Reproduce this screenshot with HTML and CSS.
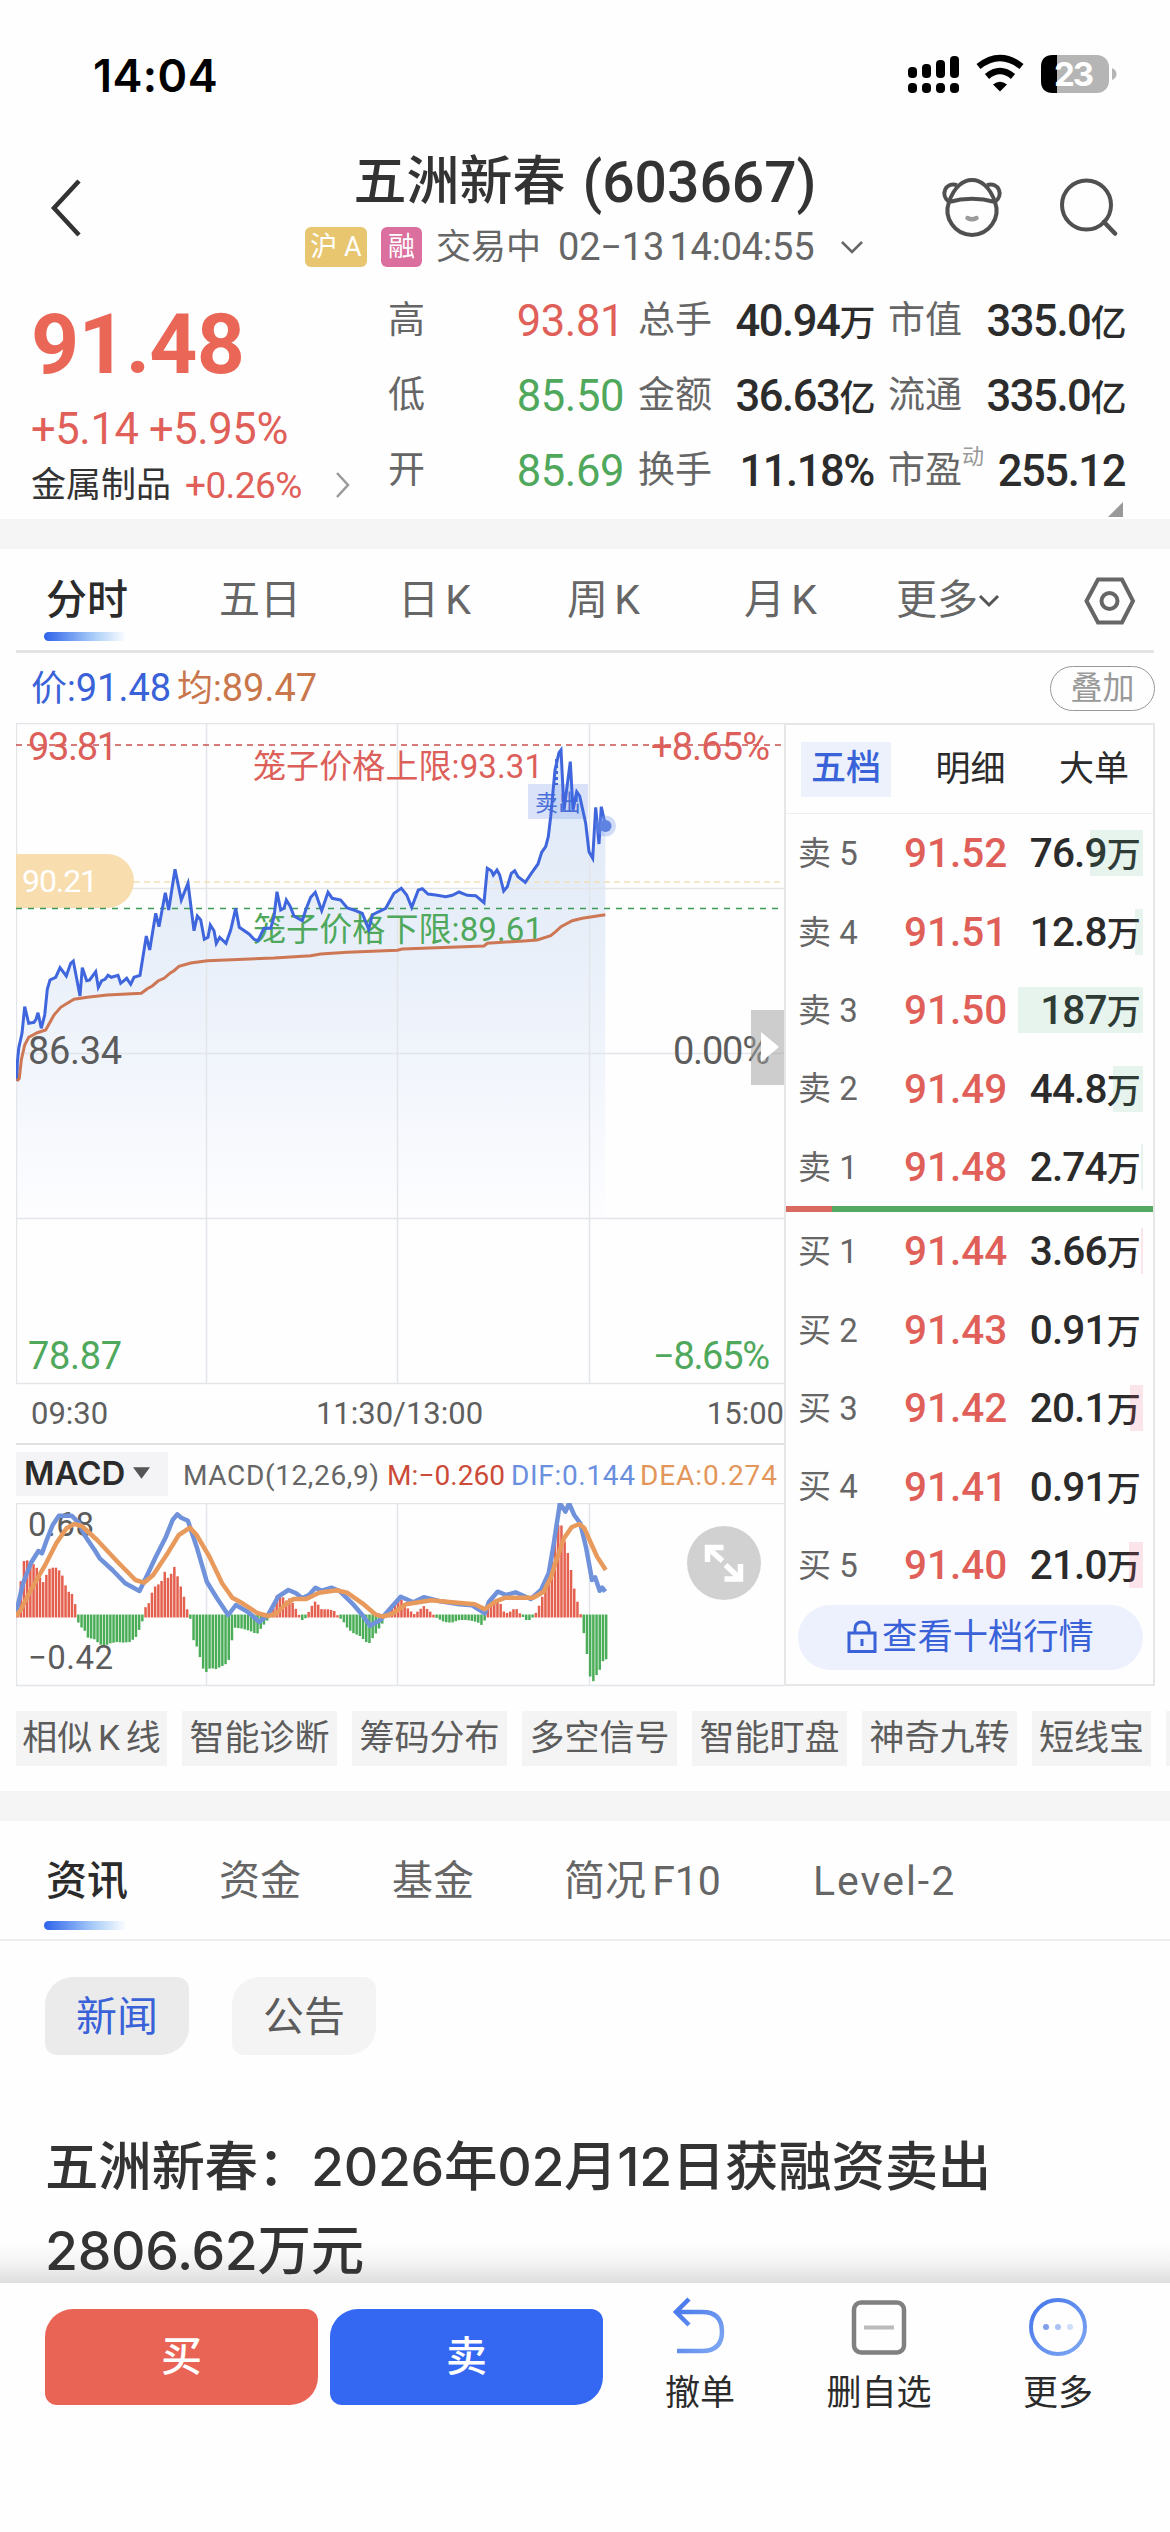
FILE: index.html
```html
<!doctype html>
<html lang="zh-CN">
  <head>
    <meta charset="UTF-8" />
    <meta name="viewport" content="width=device-width, initial-scale=1.0" />
    <title>五洲新春 (603667)</title>
    <link rel="stylesheet" href="styles.css">
  </head>
  <body>
    <div class="status-bar">
      <span class="time">14:04</span>
      <svg class="status-icons" viewBox="0 0 210 44" width="210" height="44">
        <g fill="#000">
          <rect x="0" y="14" width="9" height="11" rx="4" />
          <rect x="14" y="11" width="9" height="14" rx="4" />
          <rect x="28" y="7" width="9" height="18" rx="4" />
          <rect x="42" y="3" width="9" height="22" rx="4" />
          <rect x="0" y="30" width="9" height="10" rx="4" />
          <rect x="14" y="30" width="9" height="10" rx="4" />
          <rect x="28" y="30" width="9" height="10" rx="4" />
          <rect x="42" y="30" width="9" height="10" rx="4" />
          <path d="M92 38.500l-7-7q7-5.500 14 0z" />
        </g>
        <path d="M70.500 13.500q21.500-17 43 0M79 23.500q13-11 26 0" fill="none" stroke="#000" stroke-width="6.500" />
        <rect x="133" y="2" width="68" height="38" rx="12" fill="#b5b5b5" />
        <path d="M149 2h-4q-12 0-12 12v14q0 12 12 12h4z" fill="#000" />
        <path d="M204 15q4.500 2 4.500 6t-4.500 6z" fill="#b5b5b5" />
        <text x="146" y="33" class="battery" textLength="40">23</text>
      </svg>
    </div>

    <div class="nav">
      <svg class="back" viewBox="0 0 32 60" width="32" height="60">
        <path d="M29 3L4 30l25 27" fill="none" stroke="#333" stroke-width="4.500" />
      </svg>
      <div class="nav-title">
        <h1>五洲新春 <span class="code">(603667)</span></h1>
        <div class="nav-sub">
          <span class="tag tag-sh">沪 A</span>
          <span class="tag tag-rong">融</span>
          <span class="state">交易中</span>
          <span class="stamp">02−13 14:04:55</span>
          <svg viewBox="0 0 24 14" width="24" height="14">
            <path d="M2 2l10 10L22 2" fill="none" stroke="#666" stroke-width="2.500" />
          </svg>
        </div>
      </div>
      <svg class="mascot" viewBox="0 0 62 60" width="62" height="60">
        <g fill="none" stroke="#505050" stroke-width="4">
          <path d="M8 25C13 10 22 3 31 3s18 7 23 22" />
          <path d="M8 25a24.500 24.500 0 1 0 46 0q-23-6.500-46 0z" />
          <path d="M8 25C-1 18 4 5 16 8M54 25c9-7 4-20-8-17" />
        </g>
        <path d="M26.500 41q4.500 2.500 9 0" fill="none" stroke="#9b9b9b" stroke-width="4.500" stroke-linecap="round" />
      </svg>
      <svg class="search" viewBox="0 0 58 60" width="58" height="60">
        <circle cx="26.500" cy="28" r="24.500" fill="none" stroke="#505050" stroke-width="4" />
        <path d="M44 45l11 11.500" stroke="#505050" stroke-width="4.500" stroke-linecap="round" />
      </svg>
    </div>

    <div class="quote">
      <div class="quote-main">
        <div class="price">91.48</div>
        <div class="change">+5.14 +5.95%</div>
        <div class="sector">
          <span>金属制品</span>
          <span class="sector-pct">+0.26%</span>
          <svg viewBox="0 0 16 28" width="16" height="28">
            <path d="M2 2l11 12L2 26" fill="none" stroke="#999" stroke-width="2.500" />
          </svg>
        </div>
      </div>
      <div class="quote-grid">
        <span>高</span><b class="up">93.81</b>
        <span>总手</span><b>40.94<i>万</i></b>
        <span>市值</span><b>335.0<i>亿</i></b>
        <span>低</span><b class="down">85.50</b>
        <span>金额</span><b>36.63<i>亿</i></b>
        <span>流通</span><b>335.0<i>亿</i></b>
        <span>开</span><b class="down">85.69</b>
        <span>换手</span><b>11.18%</b>
        <span>市盈<sup>动</sup></span><b>255.12</b>
      </div>
      <div class="corner"></div>
    </div>

    <div class="band"></div>

    <div class="chart-tabs">
      <span class="active">分时</span>
      <span>五日</span>
      <span>日 K</span>
      <span>周 K</span>
      <span>月 K</span>
      <span>更多<svg viewBox="0 0 22 14" width="22" height="14"><path d="M2 2l9 9 9-9" fill="none" stroke="#555" stroke-width="3" /></svg></span>
      <svg viewBox="0 0 52 48" width="52" height="48">
        <path d="M14 2.500h24L49 24 38 45.500H14L2.500 24z" fill="none" stroke="#666" stroke-width="4" />
        <circle cx="25.500" cy="24" r="8" fill="none" stroke="#666" stroke-width="4" />
      </svg>
    </div>

    <div class="legend">
      <span class="legend-price"><i>价:</i>91.48</span>
      <span class="legend-avg"><i>均:</i>89.47</span>
      <span class="overlay-btn">叠加</span>
    </div>

    <div class="market">
      <div class="charts">
        <svg class="minute" viewBox="0 0 768 662" width="768" height="662">
          <defs>
            <linearGradient id="fill" gradientUnits="userSpaceOnUse" x1="0" y1="40" x2="0" y2="495">
              <stop offset="0" stop-color="#dfe9f7" />
              <stop offset="0.4" stop-color="#e8eff9" />
              <stop offset="1" stop-color="#fdfdff" />
            </linearGradient>
          </defs>
          <g id="minuteArea"></g>
          <g class="grid">
            <path d="M0 .5h768M0 165.500h768M0 330.500h768M0 495.500h768M0 660.500h768" />
            <path d="M.5 0v660M190.500 0v660M381.500 0v660M573.500 0v660" />
          </g>
          <path d="M0 131h91a27 27 0 0 1 0 54H0z" fill="#f7d9a6" fill-opacity=".9" />
          <path d="M118 159h650" stroke="#f3dfb4" stroke-width="1.500" stroke-dasharray="6 4" />
          <path d="M0 22h768" stroke="#c9504f" stroke-width="1.500" stroke-dasharray="6 5" />
          <path d="M0 185.500h768" stroke="#3d9a55" stroke-width="1.500" stroke-dasharray="6 6" />
          <text class="t38 up" x="12" y="37" textLength="90">93.81</text>
          <text class="t38 up" x="635" y="37" textLength="119">+8.65%</text>
          <text class="t33 up" x="237" y="55" textLength="290">笼子价格上限:93.31</text>
          <text class="t33 down" x="237" y="218" textLength="290">笼子价格下限:89.61</text>
          <text class="t38 mid" x="12" y="341" textLength="94">86.34</text>
          <text class="t38 mid" x="657" y="341" textLength="97">0.00%</text>
          <text class="t38 down" x="12" y="646" textLength="94">78.87</text>
          <text class="t38 down" x="637" y="646" textLength="117">−8.65%</text>
          <text class="t32" x="6" y="169" textLength="76" fill="#fff">90.21</text>
          <rect x="512" y="61" width="60" height="35" fill="#7a9aee" fill-opacity=".28" />
          <text class="t22" x="519" y="88" textLength="46">卖出</text>
          <path d="M540.500 36v26" stroke="#3f66dc" stroke-width="3" stroke-dasharray="3 3" />
          <g id="minuteLines"></g>
          <circle cx="589.500" cy="103" r="10.500" fill="#7a9aee" fill-opacity=".35" />
          <circle cx="589.500" cy="103" r="6" fill="#5f83e0" />
          <rect x="735" y="287" width="33" height="75" fill="#a0a0a0" fill-opacity=".52" />
          <path d="M745 309l18 15-18 15z" fill="#fff" />
        </svg>
        <div class="axis">
          <span>09:30</span><span class="noon">11:30/13:00</span><span>15:00</span>
        </div>
        <div class="macd-head">
          <span class="macd-select">MACD<svg viewBox="0 0 18 12" width="17" height="12"><path d="M0 0h18L9 12z" fill="#555" /></svg></span>
          <svg class="macd-values" viewBox="0 0 600 44" width="600" height="44">
            <text x="0" y="33" textLength="196" fill="#666">MACD(12,26,9)</text>
            <text x="204" y="33" textLength="118" fill="#cc4a38">M:−0.260</text>
            <text x="328" y="33" textLength="124" fill="#6b8fdf">DIF:0.144</text>
            <text x="457" y="33" textLength="137" fill="#e3965a">DEA:0.274</text>
          </svg>
        </div>
        <svg class="macd" viewBox="0 0 768 184" width="768" height="184">
          <path class="grid" d="M0 .5h768M0 182.500h768M.5 0v183M190.500 0v183M381.500 0v183M573.500 0v183" />
          <text class="t33 mid" x="12" y="33" textLength="66">0.68</text>
          <g id="macdBars"></g>
          <text class="t33 mid" x="12" y="166" textLength="85">−0.42</text>
          <g id="macdLines"></g>
          <circle cx="708" cy="60" r="37" fill="#ccc" fill-opacity=".9" />
          <g stroke="#fff" stroke-width="5.500" fill="none">
            <path d="M691.500 59V44.500h16M691.500 44.500l15 13.500M724.500 61v15h-16M724.500 76l-15-14" />
          </g>
        </svg>
      </div>

      <div class="book">
        <div class="book-tabs"><span class="active">五档</span><span class="detail">明细</span><span>大单</span></div>
        <div class="book-row"><span>卖 5</span><b>91.52</b><em><u class="sell" style="width: 53px"></u>76.9<i>万</i></em></div>
        <div class="book-row"><span>卖 4</span><b>91.51</b><em><u class="sell" style="width: 8px"></u>12.8<i>万</i></em></div>
        <div class="book-row"><span>卖 3</span><b>91.50</b><em><u class="sell" style="width: 125px"></u>187<i>万</i></em></div>
        <div class="book-row"><span>卖 2</span><b>91.49</b><em><u class="sell" style="width: 30px"></u>44.8<i>万</i></em></div>
        <div class="book-row"><span>卖 1</span><b>91.48</b><em><u class="sell" style="width: 2px"></u>2.74<i>万</i></em></div>
        <div class="ratio"></div>
        <div class="book-row"><span>买 1</span><b>91.44</b><em><u class="buy" style="width: 2px"></u>3.66<i>万</i></em></div>
        <div class="book-row"><span>买 2</span><b>91.43</b><em>0.91<i>万</i></em></div>
        <div class="book-row"><span>买 3</span><b>91.42</b><em><u class="buy" style="width: 13px"></u>20.1<i>万</i></em></div>
        <div class="book-row"><span>买 4</span><b>91.41</b><em>0.91<i>万</i></em></div>
        <div class="book-row"><span>买 5</span><b>91.40</b><em><u class="buy" style="width: 14px"></u>21.0<i>万</i></em></div>
        <div class="level-btn">
          <svg viewBox="0 0 30 34" width="30" height="34">
            <path d="M2 13h26v18.500H2zM8 13V9q0-7 7-7t7 7v4M15 19v7" fill="none" stroke="#3a62d8" stroke-width="3" />
          </svg>查看十档行情
        </div>
      </div>
    </div>

    <div class="tools">
      <span class="similar">相似 K 线</span><span>智能诊断</span><span>筹码分布</span><span>多空信号</span><span>智能盯盘</span><span>神奇九转</span><span class="short">短线宝</span><span></span>
    </div>

    <div class="band"></div>

    <div class="info-tabs">
      <span class="active">资讯</span>
      <span>资金</span>
      <span>基金</span>
      <span>简况 F10</span>
      <span class="level">Level-2</span>
    </div>

    <div class="news">
      <div class="news-chips"><span class="active">新闻</span><span>公告</span></div>
      <h2>五洲新春：2026年02月12日获融资卖出<br />2806.62万元</h2>
    </div>

    <div class="actions">
      <button class="buy-btn">买</button>
      <button class="sell-btn">卖</button>
      <div class="action">
        <svg viewBox="0 0 60 60" width="60" height="60">
          <defs>
            <linearGradient id="blue" x1="0" y1="0" x2="1" y2="1">
              <stop offset="0" stop-color="#4575ea" />
              <stop offset="1" stop-color="#7fa8f2" />
            </linearGradient>
          </defs>
          <path d="M19 2L6 15l13 13M7 15h25q20 0 20 19.500t-20 19.500H7" fill="none" stroke="url(#blue)" stroke-width="4.500" />
        </svg>
        <span>撤单</span>
      </div>
      <div class="action action-wide">
        <svg viewBox="0 0 60 60" width="60" height="60">
          <rect x="5" y="5.500" width="50" height="50" rx="7" fill="none" stroke="#808080" stroke-width="4.500" />
          <path d="M15 30.500h30" stroke="#bbb" stroke-width="4" />
        </svg>
        <span>删自选</span>
      </div>
      <div class="action">
        <svg viewBox="0 0 60 60" width="60" height="60">
          <circle cx="30" cy="30" r="27" fill="none" stroke="url(#blue)" stroke-width="4" />
          <circle cx="18" cy="30" r="3" fill="#7f9fe8" />
          <circle cx="30" cy="30" r="3" fill="#a9c2f3" />
          <circle cx="42" cy="30" r="3" fill="#cfdffa" />
        </svg>
        <span>更多</span>
      </div>
    </div>

    <script src="chart.js"></script>
  </body>
</html>
```

FILE: styles.css
```css
* {
  box-sizing: border-box;
}
body {
  margin: 0;
  width: 1170px;
  height: 2532px;
  overflow: hidden;
  background: #fefefe;
  color: #333;
  font-family: Roboto, "Noto Sans CJK SC", sans-serif;
  line-height: 1;
}
h1,
h2 {
  margin: 0;
}
i,
em {
  font-style: normal;
}
svg {
  display: block;
  flex: none;
}
.up {
  color: #e06059;
  fill: #dc5f5a;
}
.down {
  color: #4fa85c;
  fill: #4fa85c;
}
.mid {
  fill: #5c5c5c;
}

/* status bar */
.status-bar {
  display: flex;
  justify-content: space-between;
  height: 130px;
  padding: 53px 52px 0 93px;
}
.time {
  font-family: Inter, sans-serif;
  font-size: 45px;
  font-weight: 600;
  color: #000;
  letter-spacing: 0.4px;
}
.battery {
  font-family: Inter, sans-serif;
  font-size: 33px;
  font-weight: 700;
  fill: #fff;
}

/* title */
.nav {
  display: flex;
  height: 145px;
  padding: 0 52px 0 50px;
}
.back {
  margin-top: 48px;
}
.nav-title {
  width: 560px;
  margin: 22px 76px 0 223px;
}
.nav-title h1 {
  display: flex;
  justify-content: center;
  align-items: center;
  gap: 17px;
  height: 60px;
  font-size: 53px;
  font-weight: 500;
}
.code {
  font-size: 57px;
}
.nav-sub {
  display: flex;
  align-items: center;
  height: 40px;
  margin-top: 15px;
  font-size: 35px;
  color: #666;
}
.tag {
  height: 40px;
  border-radius: 6px;
  color: #fff;
  font-size: 27px;
  line-height: 40px;
  text-align: center;
}
.tag-sh {
  width: 62px;
  margin-right: 14px;
  background: #e8c670;
}
.tag-rong {
  width: 41px;
  margin-right: 14px;
  background: #db709f;
}
.state {
  margin-right: 17px;
  white-space: nowrap;
}
.stamp {
  width: 282px;
  font-size: 38px;
  letter-spacing: -0.2px;
  word-spacing: -4px;
  white-space: nowrap;
}
.mascot {
  margin-top: 47px;
}
.search {
  margin: 47px 0 0 57px;
}

/* quote */
.quote {
  position: relative;
  display: flex;
  height: 244px;
}
.quote-main {
  width: 388px;
  padding: 29px 0 0 31px;
}
.price {
  height: 80px;
  font-size: 84px;
  font-weight: 700;
  line-height: 82px;
  color: #ea6758;
  letter-spacing: -0.8px;
}
.change {
  height: 48px;
  margin-top: 21px;
  font-size: 43.500px;
  line-height: 50px;
  color: #e06059;
  letter-spacing: -0.4px;
}
.sector {
  display: flex;
  align-items: center;
  height: 40px;
  margin-top: 12px;
  font-size: 35px;
}
.sector-pct {
  width: 137px;
  margin: 0 13px 0 14px;
  font-size: 37px;
  color: #e06059;
  letter-spacing: -0.6px;
}
.quote-grid {
  display: grid;
  grid-template-columns: 80px 156px 90px 160px 91px 160px;
  grid-template-rows: repeat(3, 75px);
  align-items: center;
  margin-top: 9px;
  font-size: 37px;
  color: #666;
}
.quote-grid b {
  font-size: 43.500px;
  font-weight: 400;
  text-align: right;
  white-space: nowrap;
  letter-spacing: -0.4px;
}
.quote-grid b:not(.up):not(.down) {
  color: #2c2c2c;
  font-weight: 500;
  letter-spacing: -1.400px;
}
.quote-grid span {
  padding-bottom: 2px;
}
.quote-grid span:nth-of-type(3n + 2),
.quote-grid span:nth-of-type(3n) {
  padding-left: 14px;
  white-space: nowrap;
}
.quote-grid i {
  font-size: 36px;
}
.quote-grid sup {
  display: inline-block;
  width: 0;
  font-size: 22px;
  color: #999;
  vertical-align: 19px;
  line-height: 0;
}
.corner {
  position: absolute;
  right: 47px;
  bottom: 2px;
  border-left: 15px solid transparent;
  border-bottom: 15px solid #999;
}
.band {
  height: 30px;
  background: #f5f5f5;
}

/* chart tabs */
.chart-tabs {
  display: grid;
  grid-template-columns: 173px 179px 169px 177px 152px 188px 52px;
  align-items: center;
  height: 104px;
  margin: 0 16px;
  padding: 2px 0 0 30px;
  border-bottom: 3px solid #e4e4e4;
  font-size: 41px;
  color: #666;
  word-spacing: -4px;
}
.chart-tabs span {
  display: flex;
  align-items: center;
}
.chart-tabs .active,
.info-tabs .active {
  position: relative;
  color: #2b2b2b;
  font-weight: 500;
}
.chart-tabs .active::after,
.info-tabs .active::after {
  content: "";
  position: absolute;
  left: -2px;
  top: 52px;
  width: 83px;
  height: 9px;
  border-radius: 5px;
  background: linear-gradient(90deg, #2d62ea, #a9cdf8 60%, #fff);
}
.legend {
  display: flex;
  align-items: center;
  height: 70px;
  padding: 0 15px 0 31px;
  font-size: 38px;
}
.legend i {
  font-size: 36px;
}
.legend-price {
  width: 146px;
  color: #3a62d8;
}
.legend-avg {
  color: #c9764c;
}
.overlay-btn {
  width: 105px;
  height: 45px;
  margin-left: auto;
  border: 1.500px solid #999;
  border-radius: 23px;
  color: #999;
  font-size: 32px;
  line-height: 42px;
  text-align: center;
}

/* charts */
.market {
  display: flex;
  height: 963px;
  padding: 0 15px 0 16px;
}
.charts {
  width: 768px;
}
.grid {
  fill: none;
  stroke: #e3e5e9;
  stroke-width: 1.500;
}
.t38 {
  font-size: 38px;
}
.t33 {
  font-size: 33px;
}
.t32 {
  font-size: 32px;
}
.t22 {
  font-size: 23px;
  fill: #4a6fd8;
}
.price-line {
  fill: none;
  stroke: #3f66dc;
  stroke-width: 3;
}
.avg-line {
  fill: none;
  stroke: #cd7755;
  stroke-width: 3;
}
.dif-line {
  fill: none;
  stroke: #6f92db;
  stroke-width: 4.500;
  stroke-linejoin: round;
}
.dea-line {
  fill: none;
  stroke: #e89a5c;
  stroke-width: 4.500;
  stroke-linejoin: round;
}
.axis {
  display: flex;
  justify-content: space-between;
  align-items: center;
  height: 60px;
  padding: 0 0 2px 15px;
  border-bottom: 2px solid #e0e0e0;
  font-size: 31px;
  color: #5f5f5f;
}
.noon {
  margin-right: 16px;
}
.macd-head {
  display: flex;
  align-items: center;
  height: 58px;
}
.macd-select {
  display: flex;
  align-items: center;
  gap: 8px;
  width: 152px;
  height: 44px;
  padding: 0 0 2px 8px;
  background: #f4f4f6;
  color: #2b2b2b;
  font-family: Inter, sans-serif;
  font-size: 33px;
  font-weight: 600;
}
.macd-values {
  width: 600px;
  margin-left: 15px;
  font-size: 28px;
}

/* order book */
.book {
  width: 371px;
  border: 2px solid #e6e6e6;
}
.book-tabs {
  display: flex;
  align-items: center;
  justify-content: space-between;
  height: 89px;
  padding: 0 24px 0 15px;
  border-bottom: 1px solid #eee;
  font-size: 35px;
  color: #2b2b2b;
}
.book-tabs .active {
  width: 90px;
  height: 55px;
  background: #edf1fb;
  color: #3a62d8;
  font-weight: 500;
  line-height: 54px;
  text-align: center;
}
.book-tabs .detail {
  margin-right: 9px;
}
.book-row {
  display: grid;
  grid-template-columns: 106px 118px 1fr;
  align-items: center;
  height: 78.400px;
  padding: 1px 10px 0 12px;
  font-size: 33px;
  color: #666;
}
.book-row b {
  font-size: 40.500px;
  font-weight: 500;
  color: #e06059;
}
.book-row em {
  position: relative;
  padding-right: 3px;
  color: #2b2b2b;
  font-size: 40.500px;
  font-weight: 500;
  text-align: right;
  letter-spacing: -0.8px;
}
.book-row em i {
  font-size: 34px;
}
.book-row u {
  position: absolute;
  right: 0;
  top: -3px;
  height: 46px;
}
.sell {
  background: rgba(76, 168, 120, 0.13);
}
.buy {
  background: rgba(236, 90, 120, 0.15);
}
.ratio {
  height: 6px;
  background: linear-gradient(90deg, #d96a62 46px, #55a862 46px);
}
.level-btn {
  display: flex;
  justify-content: center;
  align-items: center;
  gap: 5px;
  height: 65px;
  margin: 1px 10px 0 12px;
  border-radius: 33px;
  background: #edf1fd;
  color: #3a62d8;
  font-size: 35.300px;
}

/* tools */
.tools {
  display: flex;
  gap: 15px;
  height: 105px;
  padding: 25px 0 0 16px;
  overflow: hidden;
}
.tools span {
  flex: none;
  width: 155px;
  height: 55px;
  background: #f4f4f4;
  font-size: 35px;
  line-height: 55px;
  text-align: center;
  color: #5c5c5c;
}
.tools .similar {
  width: 151px;
  word-spacing: -3px;
}
.tools .short {
  width: 119px;
}

/* info */
.info-tabs {
  display: grid;
  grid-template-columns: 173px 173px 172px 249px auto;
  align-items: center;
  height: 120px;
  padding: 3px 0 0 46px;
  border-bottom: 2px solid #ededed;
  font-size: 41px;
  color: #666;
  word-spacing: -4px;
}
.info-tabs .active {
  width: 82px;
}
.info-tabs .active::after {
  top: 60px;
}
.level {
  letter-spacing: 2px;
}
.news {
  height: 342px;
  padding: 36px 45px 0;
  overflow: hidden;
  background: linear-gradient(#fefefe 300px, #f5f5f5 320px, #dedede);
}
.news-chips {
  display: flex;
  gap: 43px;
}
.news-chips span {
  width: 144px;
  height: 78px;
  border-radius: 28px 12px 28px 12px;
  background: #f4f4f4;
  font-size: 41px;
  line-height: 80px;
  text-align: center;
  color: #5c5c5c;
}
.news-chips .active {
  background: #ebebeb;
  color: #3a62d8;
}
.news h2 {
  margin-top: 70px;
  font-family: Inter, "Noto Sans CJK SC", sans-serif;
  font-size: 53.500px;
  font-weight: 500;
  line-height: 84px;
  letter-spacing: -0.3px;
  white-space: nowrap;
}

/* bottom bar */
.actions {
  display: flex;
  height: 249px;
  padding: 14px 0 0 45px;
  background: #fefefe;
}
.actions button {
  width: 273px;
  height: 96px;
  margin: 12px 12px 0 0;
  border: none;
  border-radius: 28px 12px 28px 12px;
  background: #ea6456;
  color: #fff;
  font: inherit;
  font-size: 41px;
  font-weight: 500;
}
.actions .sell-btn {
  background: #3467f2;
}
.action {
  display: flex;
  flex-direction: column;
  align-items: center;
  gap: 19px;
  width: 170px;
  font-size: 35px;
  color: #2b2b2b;
}
.action-wide {
  width: 188px;
}
```

FILE: chart.js
```js
const NS = "http://www.w3.org/2000/svg";

// x / y pairs in thirds of a pixel, relative to the chart's corner
const price = [
  3,1074, 4,1020, 8,976, 18,931, 26,851, 38,901, 54,898, 60,889, 66,869, 76,916, 86,876, 94,799, 102,771,
  119,763, 132,734, 151,759, 164,721, 172,714, 192,819, 199,734, 212,773, 221,771, 239,746, 247,793, 257,773,
  267,769, 276,757, 286,763, 306,757, 314,781, 332,766, 344,784, 354,763, 372,757, 391,639, 401,681, 419,571,
  429,611, 448,509, 458,561, 477,439, 496,531, 516,481, 534,623, 544,579, 554,591, 565,649, 576,643, 583,606,
  594,623, 601,661, 611,643, 630,661, 644,621, 659,556, 670,613, 699,633, 714,649, 726,653, 744,616, 764,616,
  774,581, 783,506, 794,561, 804,556, 811,531, 822,549, 834,579, 859,593, 869,561, 884,523, 898,508, 917,563,
  936,508, 949,526, 974,531, 994,555, 1014,561, 1039,571, 1058,619, 1069,576, 1084,568, 1109,556, 1134,511,
  1156,496, 1172,516, 1187,553, 1207,501, 1219,497, 1236,513, 1259,516, 1289,521, 1309,517, 1329,507, 1354,517,
  1379,518, 1404,539, 1414,436, 1426,443, 1432,456, 1443,441, 1451,456, 1463,504, 1474,491, 1486,451, 1496,443,
  1506,461, 1528,478, 1546,451, 1566,423, 1577,388, 1589,371, 1597,341, 1604,281, 1617,141, 1629,89, 1635,81,
  1644,261, 1663,116, 1671,261, 1682,206, 1691,219, 1709,301, 1719,386, 1730,406, 1739,253, 1749,363, 1756,251,
  1768,306,
];
const average = [
  3,1074, 10,1066, 16,1011, 26,966, 38,943, 64,929, 89,921, 114,876, 134,853, 154,841, 174,829, 214,823,
  274,816, 376,811, 394,797, 409,789, 426,774, 444,766, 464,749, 474,743, 489,730, 524,720, 574,713, 774,705,
  884,698, 914,693, 994,688, 1144,682, 1159,678, 1404,669, 1414,661, 1534,653, 1564,651, 1604,638, 1619,626,
  1635,611, 1669,593, 1699,586, 1768,575,
];

// MACD pane: x in 1/1.96 px from x = 31, y in thirds of a pixel
const dif = [
  31,580, 45,490, 60,430, 75,393, 82,400, 90,365, 103,315, 115,287, 140,287, 155,310, 165,345, 185,390, 195,415,
  220,450, 245,490, 273,513, 290,460, 305,410, 325,350, 338,300, 347,283, 355,293, 368,302, 385,380, 405,485,
  425,535, 447,585, 462,555, 485,575, 508,606, 525,585, 545,530, 565,510, 580,520, 592,535, 605,525, 618,503,
  630,512, 650,503, 665,513, 690,550, 710,585, 725,617, 745,600, 765,565, 785,530, 810,547, 830,532, 860,543,
  900,553, 925,556, 950,580, 958,545, 975,515, 992,525, 1010,517, 1040,537, 1060,510, 1075,460, 1085,370,
  1097,250, 1108,275, 1115,250, 1125,285, 1137,310, 1148,380, 1160,480, 1166,472, 1175,512, 1180,503, 1186,515,
];
const dea = [
  31,588, 40,570, 60,510, 90,430, 110,370, 130,325, 145,312, 160,318, 190,360, 230,425, 265,480, 282,488,
  300,465, 330,395, 350,345, 372,323, 385,345, 410,410, 435,490, 455,533, 475,550, 505,580, 525,588, 540,582,
  560,552, 575,537, 600,537, 625,518, 660,511, 680,518, 710,550, 735,583, 750,590, 770,580, 795,553, 845,541,
  880,546, 930,553, 950,568, 970,545, 990,533, 1045,533, 1065,515, 1080,470, 1090,420, 1105,355, 1120,322,
  1135,312, 1145,325, 1155,360, 1170,410, 1187,450,
];
const histogram = [
  31,0, 38,80, 46,165, 50,165, 55,168, 62,158, 70,152, 78,115, 85,100, 92,130, 98,145, 110,145, 120,130,
  125,105, 132,75, 142,65, 147,35, 151,5, 154,-30, 160,-35, 166,-45, 172,-65, 185,-70, 195,-85, 205,-90,
  215,-82, 230,-78, 240,-80, 255,-78, 268,-60, 275,-30, 280,-10, 284,25, 292,40, 300,85, 315,100, 323,135,
  330,110, 342,150, 350,105, 358,70, 368,10, 373,-10, 378,-70, 388,-100, 396,-155, 404,-168, 412,-155,
  422,-160, 435,-150, 447,-140, 453,-80, 460,-35, 475,-38, 490,-45, 503,-55, 512,-35, 525,-10, 533,5, 541,60,
  550,65, 560,45, 566,55, 575,35, 585,5, 592,-12, 600,-5, 608,25, 618,45, 630,20, 645,20, 655,15, 663,-2,
  672,-15, 680,-35, 690,-50, 705,-60, 722,-85, 735,-55, 750,-20, 758,2, 765,30, 780,55, 790,45, 800,20, 812,5,
  830,30, 845,10, 855,-5, 870,-18, 885,-20, 900,-12, 915,-12, 935,-18, 948,-32, 952,20, 965,45, 978,50,
  985,15, 995,8, 1010,25, 1020,5, 1030,-12, 1040,-12, 1050,10, 1060,45, 1068,90, 1078,150, 1088,235, 1097,295,
  1105,230, 1115,175, 1123,95, 1130,50, 1137,10, 1142,-35, 1148,-90, 1154,-160, 1160,-215, 1166,-170,
  1172,-185, 1178,-140, 1186,-130,
];

function add(parentId, tag, attrs) {
  const el = document.createElementNS(NS, tag);
  for (const key in attrs) el.setAttribute(key, attrs[key]);
  document.getElementById(parentId).appendChild(el);
}

function toPath(data, fx, fy) {
  let d = "";
  for (let i = 0; i < data.length; i += 2) {
    d += (i ? "L" : "M") + fx(data[i]).toFixed(1) + " " + fy(data[i + 1]).toFixed(1);
  }
  return d;
}

const third = (v) => v / 3;
const pricePath = toPath(price, third, third);
add("minuteArea", "path", { d: pricePath + "V495H1Z", fill: "url(#fill)" });
add("minuteLines", "path", { d: pricePath, class: "price-line" });
add("minuteLines", "path", { d: toPath(average, third, third), class: "avg-line" });

const mx = (v) => (v - 31) / 1.96;
const my = (v) => (v - 249) / 3;
add("macdLines", "path", { d: toPath(dif, mx, my), class: "dif-line" });
add("macdLines", "path", { d: toPath(dea, mx, my), class: "dea-line" });

// one bar per traded minute
const zero = 113;
for (let x = 34; x < 1189; x += 6.27) {
  let i = 0;
  while (i < histogram.length - 4 && histogram[i + 2] < x) i += 2;
  const t = Math.min(1, (x - histogram[i]) / (histogram[i + 2] - histogram[i]));
  const h = (histogram[i + 1] + (histogram[i + 3] - histogram[i + 1]) * t) / 3;
  add("macdBars", "rect", {
    x: (mx(x) - 1.2).toFixed(1),
    y: (h > 0 ? zero - h : zero - 1.5).toFixed(1),
    width: 2.5,
    height: (Math.abs(h) + 1.5).toFixed(1),
    fill: h > 0 ? "#e4604f" : "#4bad58",
  });
}
```
